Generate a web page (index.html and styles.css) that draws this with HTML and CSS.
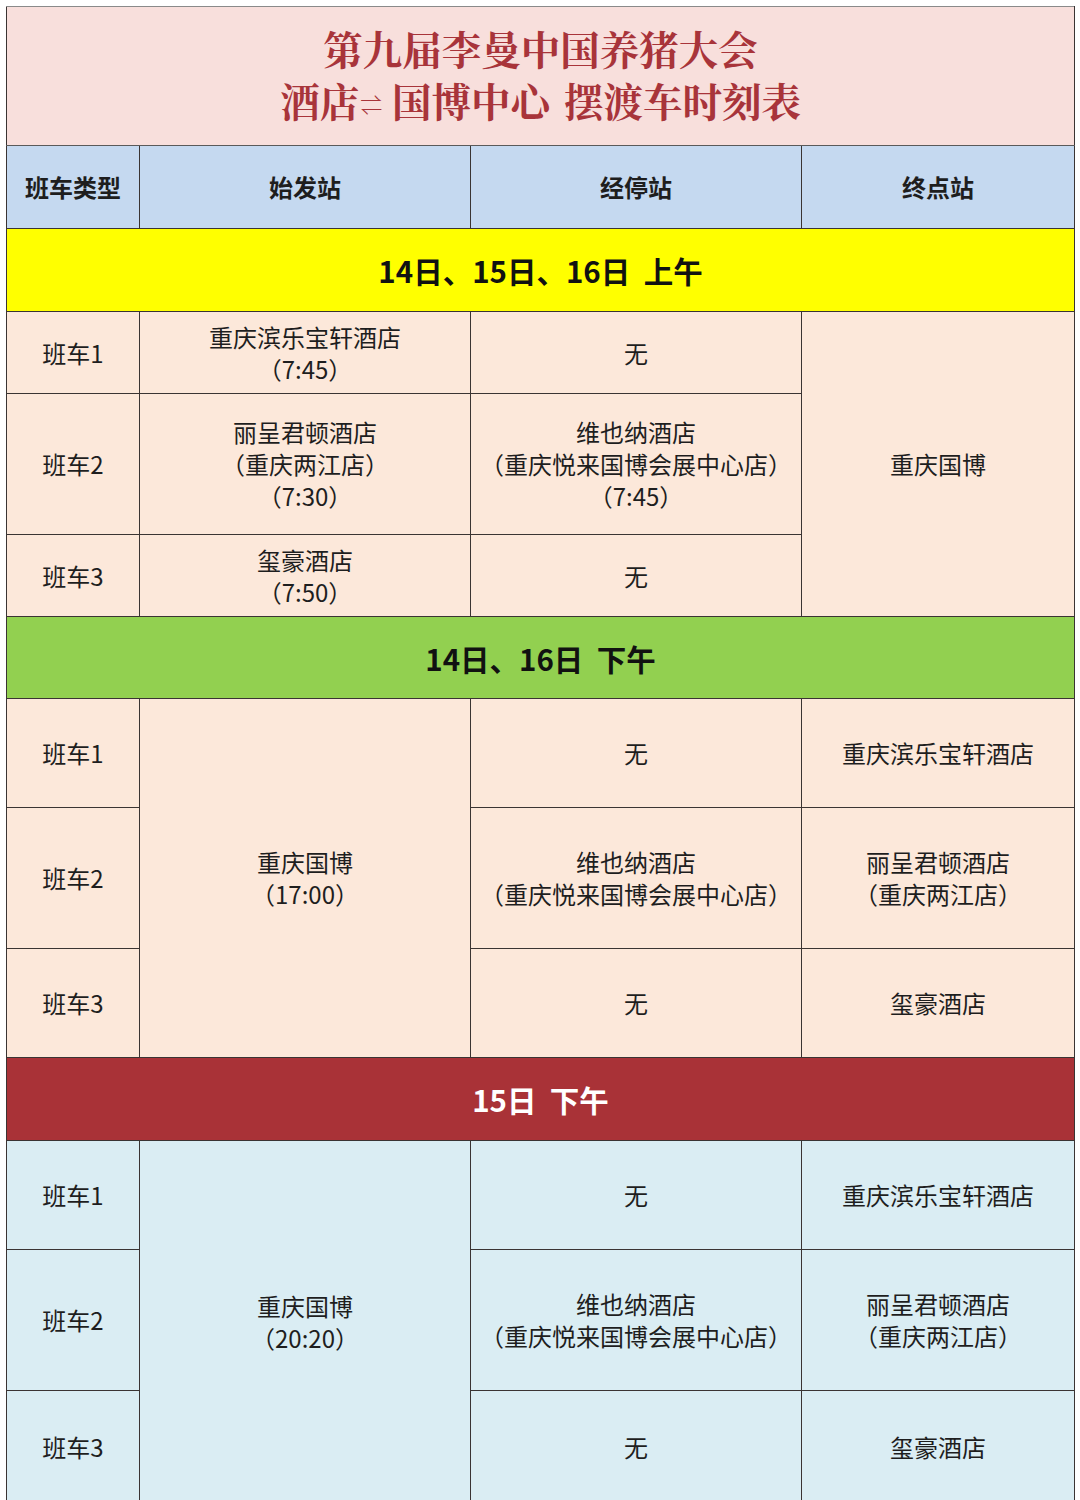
FILE: index.html
```html
<!DOCTYPE html>
<html lang="zh-CN">
<head>
<meta charset="utf-8">
<title>摆渡车时刻表</title>
<link rel="stylesheet" href="styles.css">
</head>
<body>
<table class="schedule">
  <colgroup>
    <col class="c1"><col class="c2"><col class="c3"><col class="c4">
  </colgroup>
  <tr class="r-title">
    <td colspan="4" class="title">
      <div>第九届李曼中国养猪大会</div>
      <div>酒店<span class="arrow">⇌</span> 国博中心 <span class="gap"></span>摆渡车时刻表</div>
    </td>
  </tr>
  <tr class="r-head">
    <th>班车类型</th><th>始发站</th><th>经停站</th><th>终点站</th>
  </tr>
  <tr class="r-sec">
    <td colspan="4" class="sec yellow">14日、15日、16日&nbsp; 上午</td>
  </tr>
  <tr class="r-82 peach">
    <td>班车1</td>
    <td>重庆滨乐宝轩酒店<br>（7:45）</td>
    <td>无</td>
    <td rowspan="3">重庆国博</td>
  </tr>
  <tr class="r-141 peach">
    <td>班车2</td>
    <td>丽呈君顿酒店<br>（重庆两江店）<br>（7:30）</td>
    <td>维也纳酒店<br>（重庆悦来国博会展中心店）<br>（7:45）</td>
  </tr>
  <tr class="r-82b peach">
    <td>班车3</td>
    <td>玺豪酒店<br>（7:50）</td>
    <td>无</td>
  </tr>
  <tr class="r-sec r-sec-green">
    <td colspan="4" class="sec green">14日、16日&nbsp; 下午</td>
  </tr>
  <tr class="r-109 peach">
    <td>班车1</td>
    <td rowspan="3">重庆国博<br>（17:00）</td>
    <td>无</td>
    <td>重庆滨乐宝轩酒店</td>
  </tr>
  <tr class="r-141 peach">
    <td>班车2</td>
    <td>维也纳酒店<br>（重庆悦来国博会展中心店）</td>
    <td>丽呈君顿酒店<br>（重庆两江店）</td>
  </tr>
  <tr class="r-109b peach">
    <td>班车3</td>
    <td>无</td>
    <td>玺豪酒店</td>
  </tr>
  <tr class="r-sec">
    <td colspan="4" class="sec red">15日&nbsp; 下午</td>
  </tr>
  <tr class="r-109 blue">
    <td>班车1</td>
    <td rowspan="3">重庆国博<br>（20:20）</td>
    <td>无</td>
    <td>重庆滨乐宝轩酒店</td>
  </tr>
  <tr class="r-141 blue">
    <td>班车2</td>
    <td>维也纳酒店<br>（重庆悦来国博会展中心店）</td>
    <td>丽呈君顿酒店<br>（重庆两江店）</td>
  </tr>
  <tr class="r-last blue">
    <td>班车3</td>
    <td>无</td>
    <td>玺豪酒店</td>
  </tr>
</table>
</body>
</html>
```

FILE: styles.css
```css
html, body {
  margin: 0;
  padding: 0;
  background: #ffffff;
}

body {
  padding: 6px 0 0 6px;
  font-family: "Noto Sans CJK SC", "Noto Sans", sans-serif;
  color: #1e1e1e;
}

.schedule {
  border-collapse: collapse;
  table-layout: fixed;
  width: 1068px;
}

.c1 { width: 133px; }
.c2 { width: 331px; }
.c3 { width: 331px; }
.c4 { width: 273px; }

.schedule td,
.schedule th {
  border: 1px solid #3a3433;
  padding: 0;
  text-align: center;
  vertical-align: middle;
  font-size: 24px;
  line-height: 32px;
  font-weight: 400;
}

.r-title td {
  height: 138px;
  border-color: #8a8a8a #3a3433 #5a5a5a #3a3433;
}

.schedule .title {
  background: #f8dfdc;
  color: #a8343a;
  font-family: "Noto Serif CJK SC", "Noto Sans CJK SC", serif;
  font-size: 39.5px;
  line-height: 52px;
  font-weight: 700;
}

.arrow {
  font-size: 22px;
  vertical-align: 4px;
  margin-left: 1px;
}

.gap {
  display: inline-block;
  width: 4px;
}

.r-head th {
  height: 82px;
  background: #c5d9f0;
  font-weight: 700;
  font-size: 24px;
}

.schedule .r-sec td {
  height: 82px;
  font-size: 29.5px;
  font-weight: 700;
}

.schedule .r-sec-green td {
  height: 81px;
}

.yellow { background: #ffff00; color: #111; }
.green { background: #92d050; color: #111; }
.schedule .red { background: #a93237; color: #ffffff; }

.peach td { background: #fce8da; }
.blue td { background: #daedf3; }

.r-82 td { height: 81px; }
.r-82b td { height: 81px; }
.r-109 td { height: 108px; }
.r-109b td { height: 108px; }
.r-141 td { height: 140px; }
.r-last td { height: 112px; }
```
